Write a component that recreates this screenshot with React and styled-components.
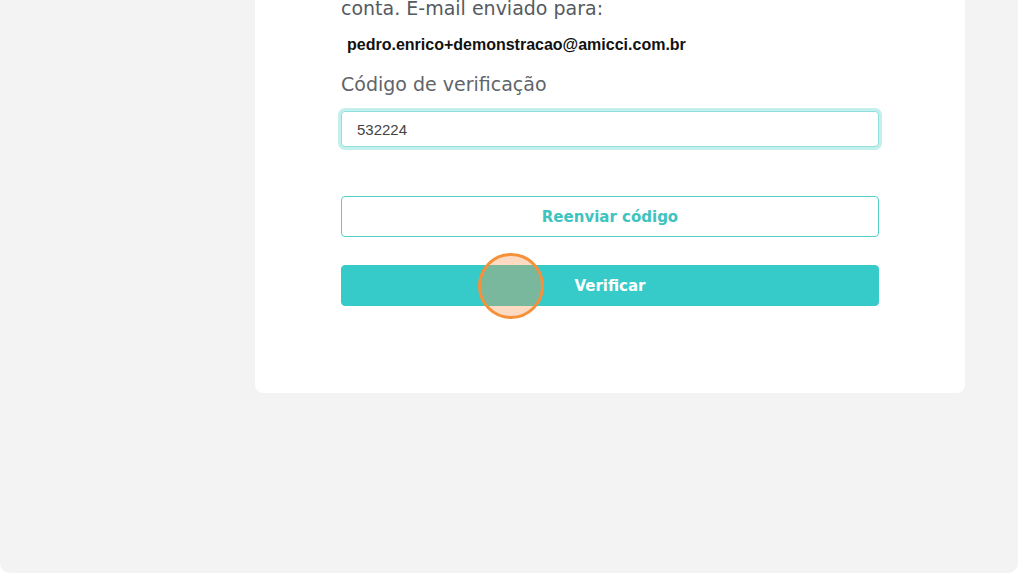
import React from "react";
import styled, { createGlobalStyle } from "styled-components";

const GlobalStyle = createGlobalStyle`
  html, body {
    margin: 0;
    padding: 0;
    background: #ffffff;
    font-family: "DejaVu Sans", "Open Sans", sans-serif;
  }
`;

const Page = styled.div`
  height: 573px;
  background: #f3f3f3;
  border-bottom-left-radius: 10px;
  border-bottom-right-radius: 10px;
  overflow: hidden;
`;

const Card = styled.div`
  margin-left: 255px;
  width: 710px;
  box-sizing: border-box;
  background: #ffffff;
  border-radius: 0 0 8px 8px;
  padding: 0 86px 87px;
`;

const Intro = styled.p`
  margin: -4px 0 0;
  font-size: 19px;
  line-height: 24px;
  color: #555a60;
`;

const Email = styled.div`
  margin: 15px 0 0 6px;
  font-family: "Liberation Sans", Arial, sans-serif;
  font-weight: bold;
  font-size: 16px;
  line-height: 20px;
  color: #111111;
`;

const Label = styled.label`
  display: block;
  margin-top: 17px;
  font-size: 19px;
  line-height: 24px;
  color: #5f646a;
`;

const Input = styled.input`
  display: block;
  width: 100%;
  box-sizing: border-box;
  height: 36px;
  margin-top: 15px;
  padding: 0 15px;
  border: 1px solid #8fe0dc;
  border-radius: 4px;
  box-shadow: 0 0 0 3px #c4efed;
  font-family: "Liberation Sans", Arial, sans-serif;
  font-size: 15px;
  color: #444;
  outline: none;
`;

const Button = styled.button`
  display: block;
  width: 100%;
  height: 41px;
  box-sizing: border-box;
  border-radius: 4px;
  font-family: "DejaVu Sans", "Open Sans", sans-serif;
  font-weight: 700;
  font-size: 15px;
  cursor: pointer;
  margin-top: ${(p) => p.$gap}px;
  border: 1px solid ${(p) => (p.$filled ? "#36cbc8" : "#56cfcb")};
  background: ${(p) => (p.$filled ? "#36cbc8" : "#ffffff")};
  color: ${(p) => (p.$filled ? "#ffffff" : "#3ec3bf")};
`;

const ButtonWrap = styled.div`
  position: relative;
`;

const ClickMark = styled.span`
  position: absolute;
  left: 137px;
  top: -12px;
  width: 60px;
  height: 60px;
  border-radius: 50%;
  border: 3px solid #f5913a;
  background: rgba(250, 150, 80, 0.35);
  pointer-events: none;
`;

export default function App() {
  return (
    <>
      <GlobalStyle />
      <Page>
        <Card>
          <Intro>conta. E-mail enviado para:</Intro>
          <Email>pedro.enrico+demonstracao@amicci.com.br</Email>
          <Label htmlFor="code">Código de verificação</Label>
          <Input id="code" defaultValue="532224" />
          <Button $gap={49}>Reenviar código</Button>
          <ButtonWrap>
            <Button $gap={28} $filled>
              Verificar
            </Button>
            <ClickMark />
          </ButtonWrap>
        </Card>
      </Page>
    </>
  );
}
